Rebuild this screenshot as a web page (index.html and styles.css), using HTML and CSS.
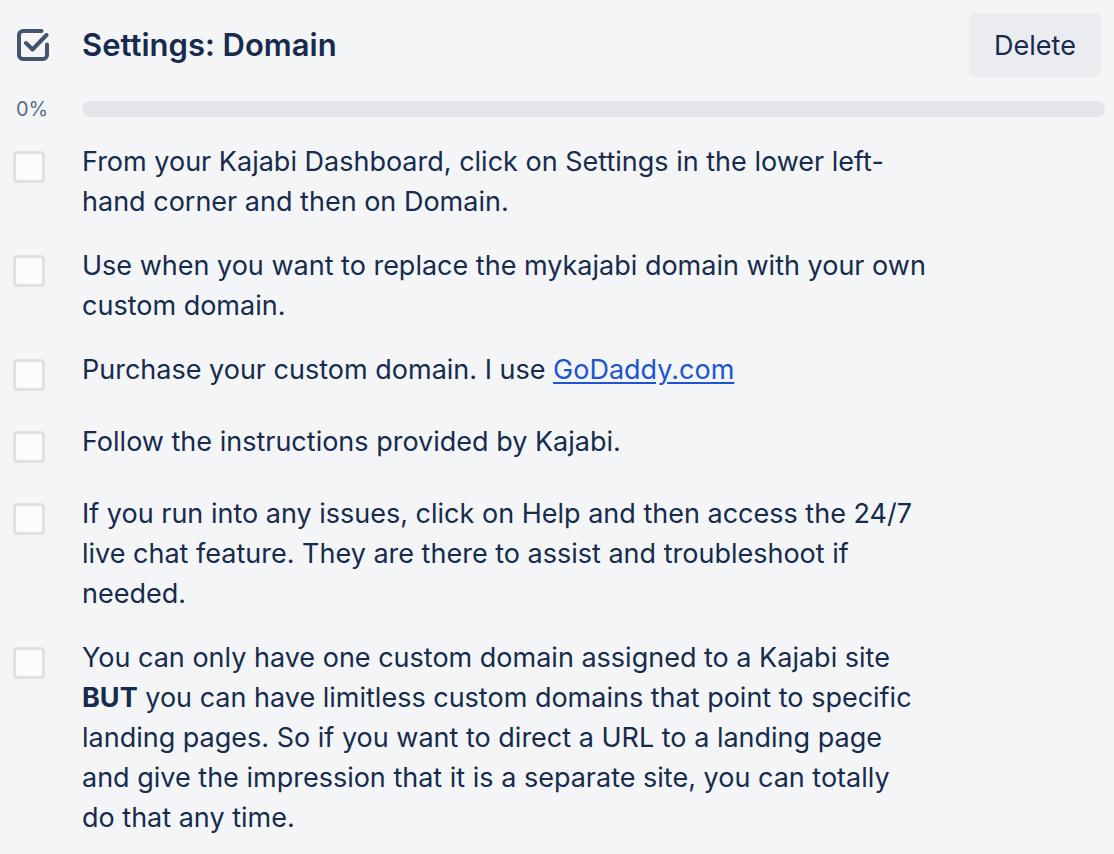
FILE: index.html
```html
<!DOCTYPE html>
<html>
<head>
<meta charset="utf-8">
<link rel="stylesheet" href="styles.css">
</head>
<body>
<div class="checklist">
  <div class="header">
    <svg class="title-icon" width="32" height="32" viewBox="0 0 32 32" fill="none">
      <path d="M24.5 2H6A4 4 0 0 0 2 6v20a4 4 0 0 0 4 4h20a4 4 0 0 0 4-4V15.5" stroke="#44546f" stroke-width="4" stroke-linecap="round" stroke-linejoin="round"/>
      <path d="M9 14l6.5 6.5L29.5 6" stroke="#44546f" stroke-width="4" stroke-linecap="round" stroke-linejoin="round"/>
    </svg>
    <h2 class="title">Settings: Domain</h2>
    <button class="delete">Delete</button>
  </div>
  <div class="progress">
    <span class="pct">0%</span>
    <div class="bar"></div>
  </div>
  <ul class="items">
    <li class="item"><span class="box"></span><p class="text">From your Kajabi Dashboard, click on Settings in the lower left-hand corner and then on Domain.</p></li>
    <li class="item"><span class="box"></span><p class="text">Use when you want to replace the mykajabi domain with your own custom domain.</p></li>
    <li class="item"><span class="box"></span><p class="text">Purchase your custom domain. I use <a href="#">GoDaddy.com</a></p></li>
    <li class="item"><span class="box"></span><p class="text">Follow the instructions provided by Kajabi.</p></li>
    <li class="item"><span class="box"></span><p class="text">If you run into any issues, click on Help and then access the 24/7 live chat feature. They are there to assist and troubleshoot if needed.</p></li>
    <li class="item"><span class="box"></span><p class="text">You can only have one custom domain assigned to a Kajabi site <strong>BUT</strong>&nbsp;you can have limitless custom domains that point to specific landing pages. So if you want to direct a URL to a landing page and give the impression that it is a separate site, you can totally do that any time.</p></li>
  </ul>
</div>
</body>
</html>
```

FILE: styles.css
```css
html, body {
  margin: 0;
  padding: 0;
  background: #f4f5f7;
}
body {
  font-family: Inter, "Noto Sans", sans-serif;
  color: #172b4d;
}
.checklist {
  width: 1114px;
  height: 854px;
  overflow: hidden;
}
.header {
  display: flex;
  align-items: center;
  padding: 13px 13px 0 17px;
  height: 64px;
}
.title-icon {
  flex: none;
  margin-right: 33px;
}
.title {
  flex: 1;
  margin: 0;
  font-size: 31px;
  font-weight: 600;
  color: #172b4d;
  line-height: 40px;
}
.delete {
  flex: none;
  width: 132px;
  height: 64px;
  border: none;
  border-radius: 6px;
  background: #ebecf0;
  color: #172b4d;
  font-family: Inter, "Noto Sans", sans-serif;
  font-size: 27px;
  font-weight: 400;
  padding: 0;
}
.progress {
  display: flex;
  align-items: center;
  margin-top: 24px;
  padding: 0 9px 0 16px;
  height: 16px;
}
.pct {
  width: 66px;
  flex: none;
  font-size: 20px;
  color: #5e6c84;
  line-height: 16px;
}
.bar {
  flex: 1;
  height: 16px;
  border-radius: 8px;
  background: #e3e5ea;
}
.items {
  list-style: none;
  margin: 13px 0 0;
  padding: 0;
}
.item {
  display: flex;
  align-items: flex-start;
  min-height: 72px;
  box-sizing: border-box;
  padding: 12px 0 12px 13px;
}
.box {
  flex: none;
  width: 32px;
  height: 32px;
  box-sizing: border-box;
  margin-top: 9px;
  margin-right: 37px;
  border: 3px solid #dfe1e6;
  border-radius: 4px;
  background: #fafbfc;
}
.text {
  margin: 0;
  width: 846px;
  font-size: 27px;
  line-height: 40px;
  color: #172b4d;
}
.text a {
  color: #1d54d0;
  text-decoration: underline;
  text-underline-offset: 3px;
}
.text strong {
  font-weight: 700;
}
```
